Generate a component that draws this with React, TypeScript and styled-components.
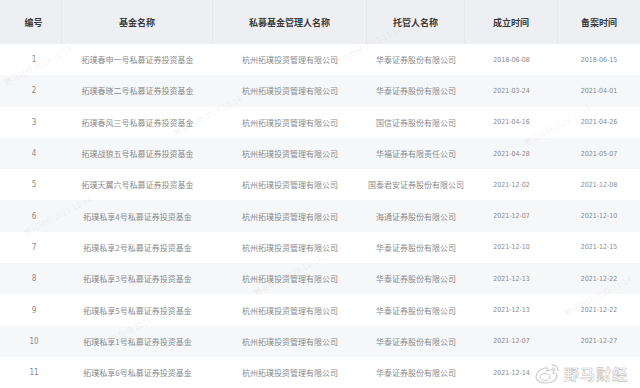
import styled, { createGlobalStyle } from "styled-components";

const GlobalStyle = createGlobalStyle`
  html, body {
    margin: 0;
    padding: 0;
    background: #ffffff;
  }
  body {
    font-family: "Noto Sans CJK SC", "Noto Sans", sans-serif;
  }
`;

const columns = ["62px", "151px", "154px", "98px", "93px", "82px"];

const rows = [
  ["1", "拓璞春申一号私募证券投资基金", "杭州拓璞投资管理有限公司", "华泰证券股份有限公司", "2018-06-08", "2018-06-15"],
  ["2", "拓璞春晓二号私募证券投资基金", "杭州拓璞投资管理有限公司", "华泰证券股份有限公司", "2021-03-24", "2021-04-01"],
  ["3", "拓璞春风三号私募证券投资基金", "杭州拓璞投资管理有限公司", "国信证券股份有限公司", "2021-04-16", "2021-04-26"],
  ["4", "拓璞战狼五号私募证券投资基金", "杭州拓璞投资管理有限公司", "华福证券有限责任公司", "2021-04-28", "2021-05-07"],
  ["5", "拓璞天翼六号私募证券投资基金", "杭州拓璞投资管理有限公司", "国泰君安证券股份有限公司", "2021-12-02", "2021-12-08"],
  ["6", "拓璞私享4号私募证券投资基金", "杭州拓璞投资管理有限公司", "海通证券股份有限公司", "2021-12-07", "2021-12-10"],
  ["7", "拓璞私享2号私募证券投资基金", "杭州拓璞投资管理有限公司", "华泰证券股份有限公司", "2021-12-10", "2021-12-15"],
  ["8", "拓璞私享3号私募证券投资基金", "杭州拓璞投资管理有限公司", "华泰证券股份有限公司", "2021-12-13", "2021-12-22"],
  ["9", "拓璞私享5号私募证券投资基金", "杭州拓璞投资管理有限公司", "华泰证券股份有限公司", "2021-12-13", "2021-12-22"],
  ["10", "拓璞私享1号私募证券投资基金", "杭州拓璞投资管理有限公司", "华泰证券股份有限公司", "2021-12-07", "2021-12-27"],
  ["11", "拓璞私享6号私募证券投资基金", "杭州拓璞投资管理有限公司", "华泰证券股份有限公司", "2021-12-14", ""],
];

const headers = ["编号", "基金名称", "私募基金管理人名称", "托管人名称", "成立时间", "备案时间"];

const marks = [
  { left: 0, top: 60 },
  { left: 170, top: 110 },
  { left: 330, top: 40 },
  { left: 20, top: 210 },
  { left: 250, top: 270 },
  { left: 520, top: 120 },
  { left: 100, top: 320 },
  { left: 560, top: 290 },
];

export default function App() {
  return (
    <>
      <GlobalStyle />
      <Page>
        <Table>
          <HeaderRow>
            {headers.map((h, i) => (
              <HeadCell key={h} $first={i === 0} $last={i === headers.length - 1}>
                {h}
              </HeadCell>
            ))}
          </HeaderRow>
          {rows.map((r, ri) => (
            <Row key={r[0]} $striped={ri % 2 === 1}>
              {r.map((c, ci) => (
                <Cell key={ci} $first={ci === 0} $date={ci >= 4}>
                  {c}
                </Cell>
              ))}
            </Row>
          ))}
        </Table>

        {marks.map((m, i) => (
          <Watermark key={i} style={{ left: m.left, top: m.top }}>
            野马财经 2023-11-14
          </Watermark>
        ))}

        <Brand>
          <svg width="26" height="22" viewBox="0 0 26 22">
            <path
              d="M10 6c-5 1-9 5-9 9 0 4 5 6 10 6 6 0 11-3 11-7 0-2-2-3-4-3 1-2 0-4-3-3l-3 1c1-2 0-4-2-3z"
              fill="#ffffff"
              stroke="#c9c9c9"
              strokeWidth="1.1"
            />
            <ellipse cx="10" cy="15" rx="5" ry="3.5" fill="none" stroke="#c9c9c9" strokeWidth="1" />
            <path d="M17 3c3 0 6 2 6 6" fill="none" stroke="#c9c9c9" strokeWidth="1.3" />
            <path d="M17 6c1.5 0 3 1 3 3" fill="none" stroke="#c9c9c9" strokeWidth="1.1" />
          </svg>
          <BrandText>野马财经</BrandText>
        </Brand>
      </Page>
    </>
  );
}

const Page = styled.div`
  position: relative;
  width: 640px;
  height: 388px;
  overflow: hidden;
  background: #ffffff;
`;

const Table = styled.div`
  display: flex;
  flex-direction: column;
  width: 640px;
`;

const HeaderRow = styled.div`
  display: grid;
  grid-template-columns: ${columns.join(" ")};
  height: 44px;
  background: #eeeff2;
`;

const HeadCell = styled.div<{ $first?: boolean; $last?: boolean }>`
  display: flex;
  align-items: center;
  justify-content: center;
  padding-left: ${(p) => (p.$first ? "6px" : "0")};
  border-right: ${(p) => (p.$last ? "none" : "1px solid #e6e7ea")};
  font-size: 9px;
  font-weight: 700;
  color: #3a3a3a;
`;

const Row = styled.div<{ $striped: boolean }>`
  display: grid;
  grid-template-columns: ${columns.join(" ")};
  height: 31.3px;
  background: ${(p) => (p.$striped ? "#f6f7f9" : "#ffffff")};
`;

const Cell = styled.div<{ $first?: boolean; $date?: boolean }>`
  display: flex;
  align-items: center;
  justify-content: center;
  padding-left: ${(p) => (p.$first ? "6px" : "0")};
  font-size: ${(p) => (p.$date ? "7px" : "8px")};
  font-family: ${(p) =>
    p.$date || p.$first ? '"DejaVu Sans Condensed", "Noto Sans", sans-serif' : '"Noto Sans CJK SC", sans-serif'};
  color: #8a8a8a;
  white-space: nowrap;
`;

const Watermark = styled.div`
  position: absolute;
  transform: rotate(-28deg);
  font-family: "Noto Sans CJK SC", sans-serif;
  font-size: 8px;
  color: rgba(150, 150, 160, 0.12);
  white-space: nowrap;
  pointer-events: none;
`;

const Brand = styled.div`
  position: absolute;
  right: 12px;
  bottom: 4px;
  display: flex;
  align-items: center;
  gap: 3px;
`;

const BrandText = styled.span`
  font-family: "Noto Sans CJK SC", sans-serif;
  font-size: 15px;
  font-weight: 700;
  color: #ffffff;
  letter-spacing: 1px;
  -webkit-text-stroke: 0.6px #c4c4c4;
`;
